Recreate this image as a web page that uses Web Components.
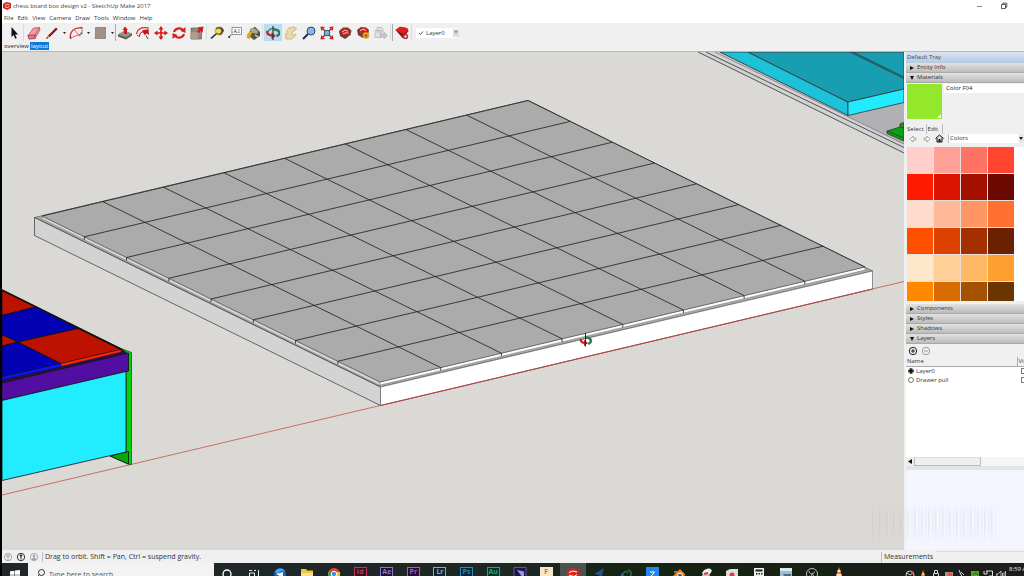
<!DOCTYPE html>
<html lang="en">
<head>
<meta charset="utf-8">
<title>chess board box design v2 - SketchUp Make 2017</title>
<style>
html,body{margin:0;height:100%;overflow:hidden;background:#000}
body{font:6px/10px "Open Sans","Noto Sans",sans-serif;color:#222}
</style>
</head>
<body>
<sk-desktop></sk-desktop>
<script>
const define = (name, html, setup) => {
  const t = document.createElement('template');
  t.innerHTML = '<style>*{box-sizing:border-box}button,input,select{font:inherit;color:inherit;margin:0;padding:0;border:0;background:none;border-radius:0;outline:0}svg{display:block}</style>' + html;
  customElements.define(name, class extends HTMLElement {
    constructor() {
      super();
      this.attachShadow({mode: 'open'}).appendChild(t.content.cloneNode(true));
      if (setup) setup(this.shadowRoot, this);
    }
  });
};

/* ---------- title bar ---------- */
define('sk-titlebar', `
<style>
:host{display:flex;align-items:center;height:12px;background:#fff;padding:0 16px 0 1px;gap:2px;color:#444}
.t{flex:1;white-space:nowrap}
.w{display:flex;gap:16px}
</style>
<svg width="8" height="8" viewBox="0 0 8 8"><path d="M0 2 3 0l5 1v5L4 8 0 6z" fill="#d8281e"/><path d="M2 3.200l2.500-.8 2 .6M2 4.800l2 .7 2.500-.8" stroke="#fff" stroke-width=".7" fill="none"/></svg>
<span class="t">chess board box design v2 - SketchUp Make 2017</span>
<span class="w">
<button aria-label="Minimize"><svg width="8" height="8"><path d="M1 4.500h5" stroke="#666" stroke-width=".8"/></svg></button>
<button aria-label="Restore"><svg width="8" height="8" fill="none" stroke="#333" stroke-width=".8"><path d="M1.500 2.500h4v4h-4zM2.800 2.500V1.200h4v4H5.500"/></svg></button>
</span>`);

/* ---------- menu ---------- */
define('sk-menubar', `
<style>
:host{display:flex;height:11px;background:#fff;padding:0 2px;gap:4px;align-items:center;color:#333}
button{line-height:10px}
</style>
<button>File</button><button>Edit</button><button>View</button><button>Camera</button><button>Draw</button><button>Tools</button><button>Window</button><button>Help</button>`);

/* ---------- toolbar ---------- */
define('sk-tool', `
<style>
:host{display:block;width:18px;height:17px}
button{width:100%;height:100%;display:flex;align-items:center;justify-content:center}
:host([active]) button{background:#b9dbf5}
</style><button><slot></slot></button>`, (r, el) => r.querySelector('button').setAttribute('aria-label', el.getAttribute('label') || 'Tool'));

define('sk-caret', `
<style>:host{display:block;width:6px}button{width:6px;height:15px;display:flex;align-items:center;justify-content:center}</style>
<button aria-label="More tools"><svg width="3" height="2"><path d="M0 0h3L1.500 2z" fill="#222"/></svg></button>`);

define('sk-toolbar', `
<style>
:host{display:flex;align-items:center;height:19px;background:#f0f0f0;padding-left:3px}
i{width:2px;height:17px;border-left:1px solid #dcdcdc}
i.d{width:1px;border-color:#aaa}
.combo{display:flex;align-items:center;margin-left:3px;background:#fff;height:10px;padding-left:2px;gap:2px;color:#333}
select{appearance:none;width:25px;height:10px;line-height:10px}
.drop{display:flex;width:6px;height:8px;background:#ddd;align-items:center;justify-content:center}
</style>
<sk-tool label="Select"><svg width="14" height="14"><path d="M4.500 1v10l2.200-2 1.600 3.800 1.500-.7-1.700-3.600h3z" fill="#111"/></svg></sk-tool><i></i>
<sk-tool label="Eraser"><svg width="14" height="14" stroke="#8c3a48" stroke-width=".6"><path d="M1 9.500 6.500 2l6 -.5L13 4 8 12.500 2 13z" fill="#f29aa8"/><path d="M1 9.500 8 9l4.500-7.500M8 9v3.500" fill="none"/><path d="M1 9.500 8 9v3.500L2 13z" fill="#e2778c"/></svg></sk-tool>
<sk-tool label="Line"><svg width="14" height="14"><path d="M1 13 3 9.500l8-8L12.500 3 4.500 11z" fill="#b5161b"/><path d="M1 13 3 9.500l1.500 1.500z" fill="#ddb98c"/><path d="M1 13l1.200-2 .9.900zM4.500 11l8-8-.6-.6L4 10.400z" fill="#222"/></svg></sk-tool><sk-caret></sk-caret>
<sk-tool label="Arc"><svg width="14" height="14" fill="none"><path d="M1.500 12C.500 6 5 1 12.500 2" stroke="#d22" stroke-width="1.300"/><path d="M1.500 12 13 7.500M5 3.500l6 7" stroke="#d44" stroke-width=".8"/><path d="M12.500 2C14 4 13 7 10.500 10" stroke="#555" stroke-width=".7"/><path d="M12 1l1.500 1M1 11l1 2M12 6.500l1.500 1.500" stroke="#333"/></svg></sk-tool><sk-caret></sk-caret>
<sk-tool label="Rectangle"><svg width="14" height="14"><path d="M2.500 1.500h10v11h-10z" fill="#99968a" stroke="#77756a" stroke-width=".7"/><path d="M1.500 13 13 1" stroke="#d66" stroke-width=".8"/></svg></sk-tool><sk-caret></sk-caret><i class="d"></i>
<sk-tool label="Push/Pull"><svg width="14" height="14"><path d="M0 8.500 6 5l8 2.500v2L8 13.500l-8-3z" fill="#5a5950"/><path d="M0 8.500 6 5l8 2.500L8 11.500z" fill="#96948a"/><path d="M7 .5 4.500 4H6v4h3V4h1z" fill="#cf1d1d"/></svg></sk-tool>
<sk-tool label="Offset"><svg width="14" height="14" fill="none"><path d="M.5 8C1 3 5 .8 13 2M3.500 11C3 7 6 5 10 6" stroke="#d22" stroke-width="1.200"/><path d="M6 4.500 12.500 3 13 9l-2-1.500L8.500 9z" fill="#c41717"/><path d="M10 9.500 12 13M1 9l1.500 1" stroke="#444"/></svg></sk-tool>
<sk-tool label="Move"><svg width="14" height="14"><path d="M7 0 4.500 3.500h1.700v2.700H3.500V4.500L0 7l3.500 2.500V7.800h2.700v2.700H4.500L7 14l2.500-3.500H7.800V7.800h2.700v1.700L14 7l-3.500-2.500v1.700H7.800V3.500h1.700z" fill="#d6191d"/></svg></sk-tool>
<sk-tool label="Rotate"><svg width="14" height="14" fill="none"><path d="M2 6C3 2.500 8 1 11 4M12 8c-1 3.700-6 5-9 2" stroke="#d32222" stroke-width="2.200"/><path d="M13.500 1v6L8.500 5zM.500 13V7l5 2z" fill="#d32222"/></svg></sk-tool>
<sk-tool label="Scale"><svg width="14" height="14"><path d="M1 2h10.500v11H1z" fill="#8d8a7e" stroke="#55534a" stroke-width=".6"/><path d="M1 6h7v7H1z" fill="#a5a294" stroke="#c77" stroke-width=".6"/><path d="M13.500.500 7.500 1.500l1.500 1.800-2 2L8.500 7l2.200-2L12.500 7z" fill="#cf1d1d"/></svg></sk-tool><i></i>
<sk-tool label="Tape Measure"><svg width="14" height="14"><circle cx="9" cy="5" r="4.500" fill="#d4bd2c"/><path d="M6 2c3-2 8-1 8 3l-3 4-5-1z" fill="#555142"/><circle cx="8.500" cy="5" r="2.600" fill="#eadd55"/><path d="M6 8 1 12.500" stroke="#222" stroke-width="1.500"/></svg></sk-tool>
<sk-tool label="Text"><svg width="14" height="14"><path d="M4 1.500h9.500v7H4z" fill="#fff" stroke="#666" stroke-width=".7"/><path d="M4 8.500l-3 2" stroke="#666" stroke-width=".8"/><circle cx="1.200" cy="11" r="1" fill="#222"/><text x="5" y="7" font-family="Liberation Serif,serif" font-size="6" fill="#333">A1</text></svg></sk-tool>
<sk-tool label="Paint Bucket"><svg width="14" height="14"><path d="M4 4 9 .800 14 6v4l-6 4-5-4z" fill="#55544a"/><ellipse cx="8" cy="4.800" rx="4.300" ry="2.200" fill="#aaa690" transform="rotate(25 8 4.800)"/><path d="M1 12c-1-4 2-7 7-6-3 1-3 4-4 7z" fill="#dba51e"/><path d="M9 9l3 2" stroke="#d9d6cc" stroke-width="1.500"/></svg></sk-tool><i></i>
<sk-tool label="Orbit" active><svg width="14" height="14" fill="none"><path d="M8 3.500c6 0 7 5 2.500 6.500" stroke="#2b7d55" stroke-width="2.400"/><path d="M2 6c1-3 4-4 7-3" stroke="#3f8f69" stroke-width="1.500"/><path d="M1.500 5C.500 8 3 9.500 7 9.500" stroke="#c72222" stroke-width="2.400"/><path d="M5.500 6.500v6.500L10 9.700z" fill="#b81f22"/><path d="M7 0v14" stroke="#26343f" stroke-width="1.200"/></svg></sk-tool>
<sk-tool label="Pan"><svg width="14" height="14"><path d="M2 13c0-3-1.500-4-.5-5L3 8.500c-.5-4 0-5.500 3-7l1.500 0L10 .700l.5 1 1.500 0 .5 1.300-4 3.500c-1 2 0 3 1 2.500l2-1 .7 1-3.700 3.500-1.500.5z" fill="#ecd9a9" stroke="#b59d68" stroke-width=".6"/></svg></sk-tool>
<sk-tool label="Zoom"><svg width="14" height="14"><path d="M1 13 6 8" stroke="#1f2d44" stroke-width="2"/><circle cx="9" cy="5" r="4" fill="#85b8e8" stroke="#3c4a5d"/></svg></sk-tool>
<sk-tool label="Zoom Extents"><svg width="14" height="14"><path d="M3 3l8 8M11 3l-8 8" stroke="#444" stroke-width="1.200"/><circle cx="7" cy="7" r="2.800" fill="#7db1dc" stroke="#456"/><path d="M.500.500 5 1 1.200 5zM13.500.500 9 1l3.800 4zM.500 13.500 5 13 1.200 9zM13.500 13.500 9 13l3.800-4z" fill="#dd1c1c"/></svg></sk-tool>
<sk-tool label="3D Warehouse"><svg width="14" height="14"><path d="M1 5 5 1.500l5 0 3.500 3-1 4.500L7 13 2 10z" fill="#5f4038"/><path d="M2.500 5 6 2l5 .800 1.500 2.500L11 9l-4 1-4-1.500z" fill="#cc2020"/><path d="M4 6l3-1.800 3 1M5 7.800l4-1.300 1.500 1" stroke="#f6c9c4" fill="none" stroke-width=".9"/></svg></sk-tool>
<sk-tool label="Share Model"><svg width="14" height="14"><path d="M1 4 5 1l5 .5L13 4l-1 6-5 2-5-3z" fill="#5f4038"/><path d="M2.500 4 6 1.500l5 1 1 2.500-2 3-3 1-4-2z" fill="#c92121"/><path d="M4 4.800 7 3l3 1.400" stroke="#f6c9c4" fill="none"/><circle cx="10" cy="9.500" r="3.300" fill="#e5a51e"/><path d="M8.500 9.500h3M10 8v4" stroke="#7a5008" stroke-width=".8"/></svg></sk-tool>
<sk-tool label="Share Component"><svg width="14" height="14" stroke="#b5b5b5" stroke-width=".8" fill="#e2e2e2"><path d="M1 4.500h6v7H1zM3 1.500h4l2 1.500v3H3z"/><path d="M6 8h4V6l3.500 3.500L10 13v-2H6z" fill="#c5c5c5"/></svg></sk-tool><i></i>
<i class="d"></i>
<sk-tool label="Extension Warehouse"><svg width="14" height="14"><path d="M.500 4 5 .800 12 2l1.500 3L8 12.500z" fill="#8b1413"/><path d="M.500 4 5 .800 12 2l1.500 3L8 8z" fill="#dc2020"/><circle cx="10.500" cy="10.500" r="2.700" fill="#b03a35"/><circle cx="10.500" cy="10.500" r="1.100" fill="#fff"/></svg></sk-tool><i></i>
<div class="combo"><svg width="6" height="6"><path d="M1 3l1.500 1.500L5 1.500" fill="none" stroke="#444" stroke-width=".9"/></svg><select aria-label="Active layer"><option>Layer0</option><option>Drawer pull</option></select><span class="drop"><svg width="4" height="3"><path d="M0 0h4L2 2.500z" fill="#888"/></svg></span></div>`);

/* ---------- scene tabs ---------- */
define('sk-scenes', `
<style>
:host{display:flex;height:10px;background:#f0f0f0;border-bottom:1px solid #b9b8b5;padding-left:2px;gap:1px}
button{height:8px;line-height:8px;color:#222}
button.on{background:#0e79d8;color:#fff;padding:0 1px}
</style><button>overview</button><button class="on">layout</button>`);

/* ---------- 3D view ---------- */
define('sk-viewport', `
<style>:host{display:block;flex:1;min-width:0;background:#dad9d6;overflow:hidden}svg{width:100%;height:100%}</style>
<svg viewBox="2 52 902 498" preserveAspectRatio="xMinYMin slice" role="img" aria-label="Chess board model" stroke-linejoin="round">
<path d="M2 495 904 281.500" stroke="#c6534e" stroke-width=".8"/>
<g stroke="#333" stroke-width=".8">
 <path d="M698 52 904 153V52z" fill="#d2d1d3" stroke="none"/>
 <path d="M718 52 904 144V52z" fill="#b1b0b2" stroke="none"/>
 <path d="M698 52 904 153M706 52 904 147.500" fill="none"/><path d="M715 52 904 144" fill="none" stroke="#777"/>
 <path d="M720 52h28l100 50v13.500z" fill="#1bc2d8"/>
 <path d="M748 52h156v37l-56 13z" fill="#179eb0"/>
 <path d="M848 102 904 89v13.500l-56 13z" fill="#22eaff"/>
 <path d="M850 52 904 78.500M853 52 904 77" fill="none"/>
 <path d="M887 131 900 127v-3l4-1.500V141l-17-7.500z" fill="#05a50d"/><path d="M887 131 904 138M900 127l4 1" fill="none"/>
</g>
<g stroke="#333" stroke-width=".7">
 <path d="M34.500 217.500 528 100.500 872.500 271 380.500 387z" fill="#a9a9a9" stroke="#555"/>
 <path d="M34.500 217.500v18L380.500 405.500V387z" fill="#d3d3d3"/>
 <path d="M380.500 387 872.500 271v18L380.500 405.500z" fill="#fff" stroke="#666"/>
 <path d="M42 216 380 382v3.500L42 219z" fill="#d6d6d6" stroke="#777" stroke-width=".5"/>
 <path d="M380 382 865 267v3L380 385z" fill="#fff" stroke="#777" stroke-width=".5"/>
 <path d="M42 216 528 100.500 865 267 380 382z" fill="#ababab" stroke="#555"/>
 <path d="M42 216 528 100.500 865 267" fill="none" stroke="#222"/>
 <path id="grid" fill="none" stroke="#1c1c1c" stroke-width=".8"/>
</g>
<path d="M380.500 405.500 872.500 289" stroke="#b8403c" stroke-width="1"/>
<g stroke="#111" stroke-width=".8">
 <path d="M2 290 121 349l7 4L2 383z" fill="#26104f"/>
 <path d="M2 290.500 35.500 307 2 315.500zM2 334.500 18 342 2 346z" fill="#bd1200"/>
 <path d="M2 315.500 35.500 307 78 328.500 18 342 2 334.500zM2 346l16-4 43 21.500L2 377z" fill="#0202b4"/>
 <path d="M18 342 78 328.500 121 349.500 61 363.500z" fill="#bd1200"/>
 <path d="M61 363.500 121 349.500v2.500L61 366.500z" fill="#ff2408" stroke-width=".3"/>
 <path d="M2 377 61 363.500v3L2 379.500z" fill="#0b16ff" stroke-width=".3"/>
 <path d="M2 290 127 352" stroke-width="1.400"/>
 <path d="M121 348.500 131.500 352.500v112h-2.500L110 456l16-4V371l2.500-.5V354z" fill="#00d00b" stroke="#185a18"/>
 <path d="M110 456 128.500 451.500V464z" fill="#07a70d"/>
 <path d="M2 383 128.500 353v18L2 400.500z" fill="#520ea0"/>
 <path d="M2 400.500 126 371.500V452L2 480.500z" fill="#22ecff"/>
</g>
<g fill="none"><path d="M586 337.500c5 0 7 4.500 2 6.500" stroke="#2f7d58" stroke-width="2.400"/><path d="M581 339c-.5 3 1 4 5 4" stroke="#c42020" stroke-width="2.400"/><path d="M584 340v6l4-3z" fill="#b01c20"/><path d="M585.500 333v13.500" stroke="#222"/></g>
</svg>`, r => {
  const A = [42, 216], u = [485.500 / 8, -115.200 / 8], v = [338 / 8, 166 / 8];
  const p = (i, j) => (A[0] + u[0] * i + v[0] * j).toFixed(1) + ' ' + (A[1] + u[1] * i + v[1] * j).toFixed(1);
  let d = '';
  for (let k = 1; k < 8; k++) d += `M${p(k, 0)}L${p(k, 8)}v3M${p(8, k)}L${p(0, k)}v3`;
  r.getElementById('grid').setAttribute('d', d);
});

/* ---------- tray ---------- */
define('sk-panel', `
<style>
:host{display:block}
button{display:flex;align-items:center;width:100%;height:10px;padding-left:4px;gap:3px;background:linear-gradient(#e2e2e2,#bcbcbc);border-bottom:1px solid #a9a9a9;line-height:9px;color:#333}
svg{width:4px;height:4px}
:host([open]) svg{transform:rotate(90deg)}
</style><button><svg viewBox="0 0 4 4"><path d="M0 0 4 2 0 4z" fill="#111"/></svg><slot name="title"></slot></button><slot></slot>`);

define('sk-materials', `
<style>
:host{display:block;background:#f0f0f0;height:221px;padding:1px 0 3px 1px;overflow:hidden}
.top{display:flex;gap:2px;height:35px}
.sw{width:35px;background:#93e82b;display:flex;align-items:flex-end;justify-content:flex-end;padding:1px}
input{flex:1;min-width:0;height:9px;line-height:9px;background:#fff;padding:0 2px;color:#222}
.tabs{display:flex;height:10px;margin-top:5px;gap:2px;line-height:10px}
.tabs button+button{border-left:1px solid #bbb;padding:0 4px 0 1px;border-right:1px solid #bbb}
.nav{display:flex;height:9px;align-items:center;gap:4px;padding-left:2px}
select{appearance:none;flex:1;min-width:0;height:9px;line-height:9px;background:#fff;border-left:1px solid #bbb;padding-left:1px}
.grid{display:grid;grid-template-columns:repeat(4,26px);grid-auto-rows:26px;gap:1px;height:154px;margin-top:4px;overflow:hidden;background:linear-gradient(90deg,#e9dfda 107px,#fff 107px)}
.grid button{width:26px;height:26px}
.cb{display:flex;flex:1;min-width:0;background:#fff}
.cb span{width:5px;height:9px;display:flex;align-items:center;background:#e6e6e6}
</style>
<div class="top"><span class="sw"><svg width="4" height="4"><path d="M4 0v4H0z" fill="#fff"/></svg></span><input aria-label="Material name" value="Color F04"></div>
<div class="tabs"><button>Select</button><button>Edit</button></div>
<div class="nav">
<button aria-label="Back"><svg width="9" height="8"><path d="M1 4 4 1v2h3v2H4v2z" fill="#fff" stroke="#888" stroke-width=".7"/></svg></button>
<button aria-label="Forward"><svg width="9" height="8"><path d="M8 4 5 1v2H2v2h3v2z" fill="#fff" stroke="#888" stroke-width=".7"/></svg></button>
<button aria-label="In Model"><svg width="9" height="9"><path d="M.500 4.500 4.500 1l4 3.500M2 4v4h5V4" fill="#ddd" stroke="#111"/><path d="M3.500 5h2v3h-2z" fill="#111"/></svg></button>
<div class="cb"><select aria-label="Material collection"><option>Colors</option></select><span><svg width="4" height="3"><path d="M0 0h4L2 3z" fill="#222"/></svg></span></div>
</div>
<div class="grid"></div>`, r => {
  const g = r.querySelector('.grid');
  ('ffcfcb ffa198 ff7364 ff4530 ff1a00 dc1500 a41000 6b0800 ffdbcb ffb898 ff9664 ff7130 ff5000 dc4100 a43000 6b2000 ' +
   'ffe7cb ffcf98 ffb864 ff9f30 ff8800 d86c00 a45200 6b3500').split(' ').forEach(c => {
    const b = document.createElement('button');
    b.style.background = '#' + c;
    b.setAttribute('aria-label', 'Color #' + c);
    g.append(b);
  });
});

define('sk-layers', `
<style>
:host{display:flex;flex-direction:column;background:#f0f0f0;height:126px;overflow:hidden}
.bar{display:flex;gap:3px;height:13px;align-items:center;padding-left:2px;flex:none}
.list{background:#fff;flex:1;overflow:hidden}
table{border-collapse:collapse;table-layout:fixed;width:150px}
th{text-align:left;font-weight:400;background:#f0f0f0;height:9px;line-height:8px;padding:0 0 0 1px;border-bottom:1px solid #aaa}
th+th{border-left:1px solid #aaa}
td{padding:0 0 0 2px;height:9px;line-height:9px}
td+td{padding-left:4px}
label{display:flex;align-items:center;gap:2px}
input{appearance:none;width:6px;height:6px;border:1px solid #777;background:#fff;flex:none}
input[type=radio]{border-radius:50%}
input[type=radio]:checked{background:radial-gradient(#111 55%,#fff 75%);border-color:#555}
td input[type=checkbox]{display:block}
.sb{display:flex;height:9px;background:#f5f5f5;flex:none}
.sb button{width:8px;display:flex;align-items:center;justify-content:center;background:#eee}
.sb span{width:67px;background:#efefef;border:1px solid #bbb;border-top-color:#ddd}
.foot{height:4px;background:#e4e4e4;flex:none}
</style>
<div class="bar"><button aria-label="Add layer"><svg width="10" height="10" fill="none" stroke="#222"><circle cx="5" cy="5" r="3.700"/><path d="M3 5h4M5 3v4"/></svg></button><button aria-label="Delete layer"><svg width="10" height="10" fill="none" stroke="#888" stroke-width=".8"><circle cx="5" cy="5" r="3.700"/><path d="M3 5h4"/></svg></button></div>
<div class="list"><table><colgroup><col style="width:111px"><col></colgroup><thead><tr><th>Name</th><th>Visible</th></tr></thead><tbody>
<tr><td><label><input type="radio" name="layer" checked>Layer0</label></td><td><input type="checkbox" aria-label="Layer0 visible" checked></td></tr>
<tr><td><label><input type="radio" name="layer">Drawer pull</label></td><td><input type="checkbox" aria-label="Drawer pull visible" checked></td></tr></tbody></table></div>
<div class="sb"><button aria-label="Scroll left"><svg width="4" height="5"><path d="M4 0v5L0 2.500z" fill="#111"/></svg></button><span></span></div>
<div class="foot"></div>`);

define('sk-tray', `
<style>
:host{display:flex;flex-direction:column;width:120px;flex:none;background:#f3f5ff;border-left:2px solid #f0f0f0;overflow:hidden;color:#333}
.h{height:11px;line-height:11px;padding-left:1px;background:linear-gradient(#d8e4f2,#b4cae2);color:#445}
</style>
<div class="h">Default Tray</div>
<sk-panel><span slot="title">Entity Info</span></sk-panel>
<sk-panel open><span slot="title">Materials</span><sk-materials></sk-materials></sk-panel>
<sk-panel><span slot="title">Components</span></sk-panel>
<sk-panel><span slot="title">Styles</span></sk-panel>
<sk-panel><span slot="title">Shadows</span></sk-panel>
<sk-panel open><span slot="title">Layers</span><sk-layers></sk-layers></sk-panel>`);

/* ---------- status bar ---------- */
define('sk-status', `
<style>
:host{display:flex;align-items:center;height:13px;background:#f0f0f0;padding-left:1px;gap:3px;color:#333;font-size:7px}
.m{border-left:1px solid #bbb;padding-left:2px;white-space:nowrap}
.t{flex:1;border-left:1px solid #bbb;padding-left:2px}
input{width:88px;height:11px;border-top:1px solid #ddd}
</style>
<svg width="10" height="10" fill="none" stroke="#999" stroke-width=".8"><circle cx="5" cy="5" r="3.700"/><path d="M5 8V5.500M3.800 3h2.400v2H3.800z"/></svg>
<svg width="10" height="10" fill="none" stroke="#222" stroke-width=".9"><circle cx="5" cy="5" r="3.700"/><path d="M5 7.500V4"/><circle cx="5" cy="3.500" r=".8" fill="#222"/></svg>
<svg width="10" height="10" fill="#aaa" stroke="#999" stroke-width=".8"><circle cx="5" cy="5" r="3.700" fill="none"/><circle cx="5" cy="4" r="1"/><path d="M3 7.500c0-2 4-2 4 0z"/></svg>
<span class="t">Drag to orbit. Shift = Pan, Ctrl = suspend gravity.</span>
<label class="m" for="vcb">Measurements</label><input id="vcb">`);

/* ---------- OS taskbar ---------- */
define('os-tile', `
<style>:host{display:block;width:13px;height:14px;border:1px solid var(--c);border-bottom:0;color:var(--t,var(--c));background:var(--b);font:700 7px/8px "Open Sans",sans-serif;text-align:center}</style><slot></slot>`);

define('os-taskbar', `
<style>
:host{display:flex;height:13px;overflow:hidden;background:linear-gradient(90deg,#20262a,#1d2724 50%,#142312 62%,#172114 78%,#1c1c1e);align-items:flex-start}
.start{width:26px;padding:7px 0 0 8px;flex:none}
.find{display:flex;width:186px;height:24px;background:#f3f3f3;flex:none;padding:6px 0 0 8px;gap:4px;color:#555;font-size:7px}
.find input{width:140px;height:12px;line-height:12px}
.find input::placeholder{color:#555;opacity:1}
.apps{display:grid;grid-template-columns:repeat(24,1fr);flex:0 0 638px;justify-items:center}
.apps button{width:100%;height:24px;padding-top:4px;display:flex;justify-content:center;align-items:flex-start}
.apps .on{background:#4b5350}
.sys{margin-left:auto;display:flex;gap:3px;padding-top:7px;flex:none}
.sys span{width:10px}
time{width:18px;white-space:nowrap;overflow:hidden;color:#eee;padding:1px 0 0 3px;flex:none}
</style>
<button class="start" aria-label="Start"><svg width="10" height="10" fill="#fff"><path d="M0 1.300 4.500.700v4H0zM5 .600 10 0v4.700H5zM0 5.300h4.500v4H0zM5 5.300h5V10L5 9.300z"/></svg></button>
<label class="find"><svg width="9" height="10" fill="none" stroke="#333"><circle cx="5.500" cy="3.500" r="3"/><path d="M3.500 5.500.500 8.500"/></svg><input type="search" placeholder="Type here to search" aria-label="Search"></label>
<div class="apps"></div>
<div class="sys">
<span><svg width="10" height="10" fill="none" stroke="#ccc"><circle cx="5" cy="5" r="4"/><path d="M2 3l3 2 3-2"/><circle cx="7.500" cy="2.500" r="1.200" fill="#e33" stroke="none"/></svg></span>
<span><svg width="10" height="10"><path d="M5 0l3 9H2z" fill="#f58a1f"/><path d="M4 4h2.500" stroke="#fff"/></svg></span>
<span><svg width="10" height="10" fill="none" stroke="#ddd"><path d="M3.500.500h3v3h-3zM2.500 3.500h5V10h-5z"/></svg></span>
<span><svg width="10" height="10"><path d="M1 2h8v7H1z" fill="#999"/><circle cx="6" cy="5" r="2.500" fill="#f0532a"/></svg></span>
<span><svg width="10" height="10" fill="none" stroke="#ddd"><path d="M2 0l2 5 4 4M4 2l3 3"/></svg></span>
<span><svg width="10" height="10"><path d="M1 1h8v8H1z" fill="#50a81c"/><path d="M3 5c2-3 4-2 5 0" stroke="#174e0a" fill="none"/></svg></span>
<span><svg width="10" height="10" fill="none" stroke="#ddd"><path d="M3 1h6.500v5H6M1 1v3h3V1M4 9h4"/></svg></span>
<span><svg width="10" height="10" fill="none" stroke="#ddd"><path d="M0 4h2l3-3v8L2 6H0zM6.500 3v4M8 2v6M9.500 1v8" stroke-width=".8"/></svg></span>
</div><time>8:59 AM</time>`, r => {
  const svg = s => `<svg width="14" height="14">${s}</svg>`;
  const tile = (t, c, b) => `<os-tile style="--c:${c};--b:${b}">${t}</os-tile>`;
  const apps = [
    ['Cortana', svg('<circle cx="7" cy="7" r="4" fill="none" stroke="#fff" stroke-width="1.300"/>')],
    ['Task View', svg('<path d="M2 3.500h3M7 3.500h2M2.500 6h5v5h-5zM11.500 3v8" fill="none" stroke="#eee"/>')],
    ['Thunderbird', svg('<circle cx="7" cy="7" r="6" fill="#1762b8"/><path d="M2 5c3-5 9-4 10 0-3-2-6-1-7 2z" fill="#48a7f5"/><path d="M3 7l7-2v6z" fill="#eee"/>')],
    ['Explorer', svg('<path d="M1 2h5l1 1.500h6V13H1z" fill="#f4c545"/><path d="M1 6h12v3H1z" fill="#fae08a"/><path d="M3 9h8v4H3z" fill="#3f9ae0"/>')],
    ['Chrome', svg('<circle cx="7" cy="7" r="6" fill="#e84335"/><path d="M1.800 4A6 6 0 0 0 7 13L9 8H5z" fill="#34a853"/><path d="M13 6a6 6 0 0 1-6 7l3-6-1-2h4z" fill="#fbc116"/><circle cx="7" cy="7" r="2.700" fill="#4285f4" stroke="#fff"/>')],
    ['InDesign', tile('Id', '#b43d5c', '#3a1020')],
    ['After Effects', tile('Ae', '#8d76cc', '#1e1136')],
    ['Premiere', tile('Pr', '#ab5cbb', '#2b0c34')],
    ['Lightroom', tile('Lr', '#8aaabc', '#10242e')],
    ['Photoshop', tile('Ps', '#238bbb', '#06243a')],
    ['Audition', tile('Au', '#1aa685', '#06302b')],
    ['Media Encoder', svg('<path d="M1 .5h12v14H1z" fill="#1c1749" stroke="#5d56a6"/><path d="M4 3l7 1.500v8z" fill="#9c94ee"/>')],
    ['Fusion', `<os-tile style="--c:#f7e6cc;--t:#d5701a;--b:#f7e6cc">F</os-tile>`],
    ['SketchUp', svg('<path d="M1 4 6 1l7 2v6l-5 5-7-3z" fill="#d8261d"/><path d="M3 5.500l4-1.500 4 1M3 8l5 1.500 3-2" stroke="#fff" fill="none"/>')],
    ['Maps', svg('<path d="M12 1 9 12 7 8 2 7z" fill="#274e86"/>')],
    ['Camtasia', svg('<path d="M3 9C4 5 7 3 9 6M9 3c4 1 4 6 1 8" stroke="#2f6c58" stroke-width="1.500" fill="none"/><path d="M2 7l3 3" stroke="#2b66a3" stroke-width="2"/>')],
    ['Zoom', svg('<path d="M0 0h13v14H0z" fill="#2285ec"/><path d="M4 5h4.500L4.500 10H9" stroke="#fff" fill="none"/>')],
    ['Blender', svg('<path d="M1 9l7-7 5 5-1 5-6 1-3-3z" fill="#ee8222"/><path d="M2 5h7" stroke="#ee8222" stroke-width="1.500"/><circle cx="8" cy="8.500" r="2.300" fill="#235796" stroke="#fff"/>')],
    ['Snip', svg('<ellipse cx="8" cy="5" rx="5" ry="3" fill="#eee" transform="rotate(-25 8 5)"/><path d="M3 8l8-1-2 6-6-1z" fill="#b8c5d4"/><path d="M5 7l4-1" stroke="#d33" stroke-width="2"/>')],
    ['Recorder', svg('<path d="M1 4 5 2h8v10H1z" fill="#ddd"/><circle cx="7" cy="8" r="2.500" fill="#dd3836"/>')],
    ['Calculator', svg('<path d="M2 1h10v12H2z" fill="#eee"/><path d="M3.500 2.500h7v2h-7zM4 6h1.500v1.500H4zM6.500 6H8v1.500H6.500zM9 6h1.500v1.500H9zM4 8.500h6.500" fill="#222"/>')],
    ['Notes', svg('<path d="M1 1h12v13H1z" fill="#a0bed1"/><path d="M1 1h12v3H1z" fill="#dbe9f0"/><path d="M4 7h8v4H6z" fill="#446f87"/>')],
    ['OBS', svg('<circle cx="7" cy="7" r="5.500" fill="#171717" stroke="#bbb"/><path d="M4 4c0 3 3 3 4 2M10 5c-2 0-3 3-1 4M4 9c2 1 3 0 3-2" stroke="#bbb" fill="none"/>')],
    ['VLC', svg('<path d="M7 0l4 12H3z" fill="#f4831f"/><path d="M5.500 4h3M4.500 8h5" stroke="#fff" stroke-width="1.500"/>')]
  ];
  r.querySelector('.apps').innerHTML = apps.map(([n, h]) => `<button aria-label="${n}"${n === 'SketchUp' ? ' class="on"' : ''}>${h}</button>`).join('');
});

/* ---------- desktop ---------- */
define('sk-desktop', `
<style>
:host{display:flex;flex-direction:column;height:100vh;border-left:2px solid #000;background:#f0f0f0;position:relative}
main{display:flex;flex:1;min-height:0}
.haze{position:absolute;right:28px;bottom:32px;width:124px;height:40px;pointer-events:none;opacity:.16;background:repeating-linear-gradient(90deg,#a8a69c 0 1px,#0000 2px 4px,#b8b6ac 5px,#0000 6px 7px);mask-image:linear-gradient(#0000,#000 30% 60%,#0000)}
</style>
<sk-titlebar></sk-titlebar><sk-menubar></sk-menubar><sk-toolbar></sk-toolbar><sk-scenes></sk-scenes>
<main><sk-viewport></sk-viewport><sk-tray></sk-tray></main>
<sk-status></sk-status><os-taskbar></os-taskbar>
<div class="haze"></div>`);
</script>
</body>
</html>
